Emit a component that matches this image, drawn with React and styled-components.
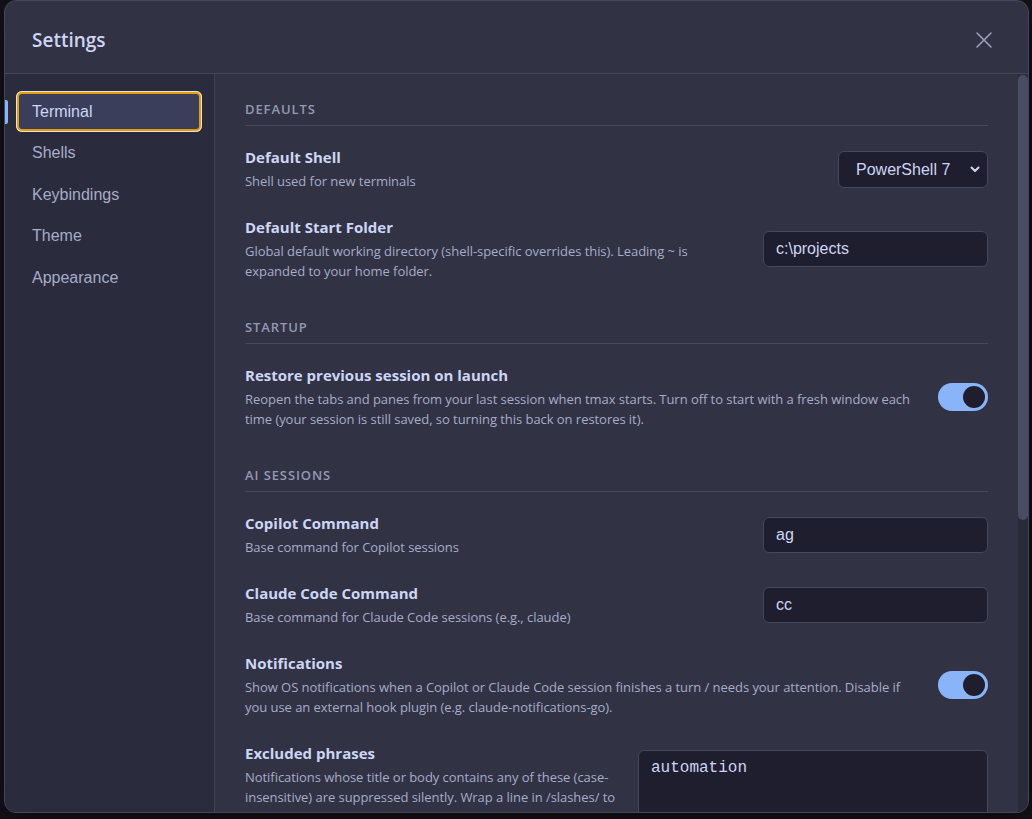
import React, { useState } from "react";
import styled, { createGlobalStyle } from "styled-components";

const Global = createGlobalStyle`
  html, body { margin: 0; padding: 0; background: #141218; }
  * { box-sizing: border-box; }
`;

const Backdrop = styled.div`
  min-height: 100vh;
  display: flex;
  align-items: flex-start;
  padding-left: 4px;
  background: #141218;
`;

const Modal = styled.div`
  width: 1025px;
  height: 813px;
  background: #313244;
  border: 1px solid #44465a;
  border-radius: 12px;
  overflow: hidden;
  display: flex;
  flex-direction: column;
  box-shadow: 0 10px 40px rgba(0, 0, 0, 0.5);
`;

const Header = styled.div`
  height: 73px;
  flex: none;
  display: flex;
  align-items: center;
  justify-content: space-between;
  padding: 5px 28px 0 27px;
  border-bottom: 1px solid #44465a;
`;

const Title = styled.h1`
  margin: 0;
  font-family: "Segoe UI", "Open Sans", sans-serif;
  font-size: 19px;
  font-weight: 600;
  color: #cdd6f4;
`;

const CloseButton = styled.button`
  width: 32px;
  height: 32px;
  display: flex;
  align-items: center;
  justify-content: center;
  padding: 0;
  border: none;
  background: transparent;
  color: #9ea3bd;
  cursor: pointer;
`;

const Body = styled.div`
  flex: 1;
  min-height: 0;
  display: flex;
`;

const Sidebar = styled.nav`
  width: 210px;
  flex: none;
  background: #2a2b3c;
  border-right: 1px solid #3e4054;
  padding: 16.5px 12px 16px 11px;
  display: flex;
  flex-direction: column;
`;

const NavItem = styled.button`
  position: relative;
  display: block;
  width: 100%;
  text-align: left;
  border: none;
  border-radius: 6px;
  padding: 11px 16px;
  font-family: "Liberation Sans", Arial, sans-serif;
  font-size: 16px;
  line-height: 19.5px;
  color: ${(p) => (p.$active ? "#cdd6f4" : "#a6adc8")};
  background: ${(p) => (p.$active ? "#3b3e5b" : "transparent")};
  box-shadow: ${(p) =>
    p.$active ? "inset 0 0 0 1px #e9e4d8, inset 0 0 0 3px #e29e10" : "none"};
  cursor: pointer;

  &::before {
    content: "";
    display: ${(p) => (p.$active ? "block" : "none")};
    position: absolute;
    left: -11px;
    top: 9px;
    width: 3px;
    height: 24px;
    border-radius: 0 2px 2px 0;
    background: #89b4fa;
  }
`;

const Content = styled.div`
  flex: 1;
  min-width: 0;
  overflow-y: auto;
  scrollbar-width: none;
  padding: 27px 30px 30px 30px;
  font-family: "Segoe UI", "Open Sans", sans-serif;

  &::-webkit-scrollbar { display: none; }
`;

const ScrollTrack = styled.div`
  width: 10px;
  flex: none;
  background: #292a3a;
  padding-top: 1px;
`;

const ScrollThumb = styled.div`
  width: 10px;
  height: 445px;
  border-radius: 5px;
  background: #4a4c63;
`;

const Section = styled.section`
  & + & { margin-top: 25px; }
`;

const SectionTitle = styled.h2`
  margin: 0 0 8px 0;
  padding-bottom: 8px;
  border-bottom: 1px solid #45475a;
  font-size: 13px;
  line-height: 16px;
  font-weight: 600;
  letter-spacing: 0.9px;
  text-transform: uppercase;
  color: #9399b2;
`;

const Row = styled.div`
  display: flex;
  align-items: center;
  justify-content: space-between;
  gap: 20px;
  padding: 13px 0;
`;

const TextBlock = styled.div`
  flex: 1;
  min-width: 0;
`;

const Label = styled.div`
  font-size: 15px;
  line-height: 20px;
  font-weight: 700;
  color: #cdd6f4;
  margin-bottom: 4px;
`;

const Desc = styled.div`
  font-size: 13px;
  line-height: 20px;
  letter-spacing: -0.05px;
  color: #a6adc8;
`;

const SelectWrap = styled.div`
  position: relative;
  flex: none;
  width: ${(p) => p.$w || 150}px;
`;

const Select = styled.select`
  appearance: none;
  -webkit-appearance: none;
  width: 100%;
  height: 37px;
  padding: 0 34px 0 17px;
  background: #1e1e2e;
  border: 1px solid #45475a;
  border-radius: 6px;
  color: #cdd6f4;
  font-family: "Liberation Sans", Arial, sans-serif;
  font-size: 16px;
  outline: none;
`;

const Chevron = styled.span`
  position: absolute;
  right: 7px;
  top: 50%;
  transform: translateY(-50%);
  display: flex;
  color: #cdd6f4;
  pointer-events: none;
`;

const TextInput = styled.input`
  flex: none;
  width: ${(p) => p.$w || 225}px;
  height: 36px;
  padding: 0 12px;
  background: #1e1e2e;
  border: 1px solid #45475a;
  border-radius: 6px;
  color: #cdd6f4;
  font-family: "Liberation Sans", Arial, sans-serif;
  font-size: 16px;
  outline: none;
`;

const TextArea = styled.textarea`
  flex: none;
  width: 350px;
  height: 90px;
  padding: 8px 12px;
  background: #1e1e2e;
  border: 1px solid #45475a;
  border-radius: 6px;
  color: #cdd6f4;
  font-family: "Liberation Mono", "Courier New", monospace;
  font-size: 16px;
  line-height: 19px;
  resize: none;
  outline: none;
`;

const ToggleTrack = styled.button`
  flex: none;
  position: relative;
  width: 50px;
  height: 28px;
  padding: 0;
  border: none;
  border-radius: 14px;
  background: ${(p) => (p.$on ? "#89b4fa" : "#45475a")};
  cursor: pointer;

  &::after {
    content: "";
    position: absolute;
    top: 3px;
    left: ${(p) => (p.$on ? "25px" : "3px")};
    width: 22px;
    height: 22px;
    border-radius: 50%;
    background: #1e1e2e;
  }
`;

function Toggle({ initial = true }) {
  const [on, setOn] = useState(initial);
  return <ToggleTrack $on={on} onClick={() => setOn(!on)} aria-pressed={on} />;
}

function XIcon() {
  return (
    <svg width="18" height="18" viewBox="0 0 18 18" fill="none" stroke="currentColor" strokeWidth="1.5" strokeLinecap="round">
      <path d="M2 2 L16 16 M16 2 L2 16" />
    </svg>
  );
}

function ChevronIcon() {
  return (
    <svg width="12" height="12" viewBox="0 0 12 12" fill="none" stroke="currentColor" strokeWidth="2" strokeLinecap="round" strokeLinejoin="round">
      <path d="M2.5 4.5 L6 8 L9.5 4.5" />
    </svg>
  );
}

function Setting({ label, desc, children }) {
  return (
    <Row>
      <TextBlock>
        <Label>{label}</Label>
        <Desc>{desc}</Desc>
      </TextBlock>
      {children}
    </Row>
  );
}

const navItems = ["Terminal", "Shells", "Keybindings", "Theme", "Appearance"];

export default function App() {
  const [active, setActive] = useState("Terminal");
  return (
    <>
      <Global />
      <Backdrop>
        <Modal>
          <Header>
            <Title>Settings</Title>
            <CloseButton aria-label="Close">
              <XIcon />
            </CloseButton>
          </Header>
          <Body>
            <Sidebar>
              {navItems.map((n) => (
                <NavItem key={n} $active={n === active} onClick={() => setActive(n)}>
                  {n}
                </NavItem>
              ))}
            </Sidebar>
            <Content>
              <Section>
                <SectionTitle>Defaults</SectionTitle>
                <Setting label="Default Shell" desc="Shell used for new terminals">
                  <SelectWrap $w={150}>
                    <Select defaultValue="pwsh">
                      <option value="pwsh">PowerShell 7</option>
                      <option value="cmd">Command Prompt</option>
                      <option value="wsl">WSL</option>
                    </Select>
                    <Chevron>
                      <ChevronIcon />
                    </Chevron>
                  </SelectWrap>
                </Setting>
                <Setting
                  label="Default Start Folder"
                  desc="Global default working directory (shell-specific overrides this). Leading ~ is expanded to your home folder."
                >
                  <TextInput defaultValue="c:\projects" />
                </Setting>
              </Section>

              <Section>
                <SectionTitle>Startup</SectionTitle>
                <Setting
                  label="Restore previous session on launch"
                  desc="Reopen the tabs and panes from your last session when tmax starts. Turn off to start with a fresh window each time (your session is still saved, so turning this back on restores it)."
                >
                  <Toggle />
                </Setting>
              </Section>

              <Section>
                <SectionTitle>AI Sessions</SectionTitle>
                <Setting label="Copilot Command" desc="Base command for Copilot sessions">
                  <TextInput defaultValue="ag" />
                </Setting>
                <Setting label="Claude Code Command" desc="Base command for Claude Code sessions (e.g., claude)">
                  <TextInput defaultValue="cc" />
                </Setting>
                <Setting
                  label="Notifications"
                  desc="Show OS notifications when a Copilot or Claude Code session finishes a turn / needs your attention. Disable if you use an external hook plugin (e.g. claude-notifications-go)."
                >
                  <Toggle />
                </Setting>
                <Setting
                  label="Excluded phrases"
                  desc="Notifications whose title or body contains any of these (case-insensitive) are suppressed silently. Wrap a line in /slashes/ to use a regex (case-insensitive). Useful for filtering out automated sessions."
                >
                  <TextArea defaultValue="automation" />
                </Setting>
              </Section>

              <Section>
                <SectionTitle>Advanced</SectionTitle>
                <Setting label="Scrollback Lines" desc="Number of lines kept in each terminal's history">
                  <TextInput defaultValue="10000" />
                </Setting>
                <Setting label="Copy on Select" desc="Copy selected text to the clipboard automatically">
                  <Toggle initial={false} />
                </Setting>
                <Setting label="Confirm on Close" desc="Ask before closing a pane with a running process">
                  <Toggle />
                </Setting>
              </Section>
            </Content>
            <ScrollTrack aria-hidden="true">
              <ScrollThumb />
            </ScrollTrack>
          </Body>
        </Modal>
      </Backdrop>
    </>
  );
}
